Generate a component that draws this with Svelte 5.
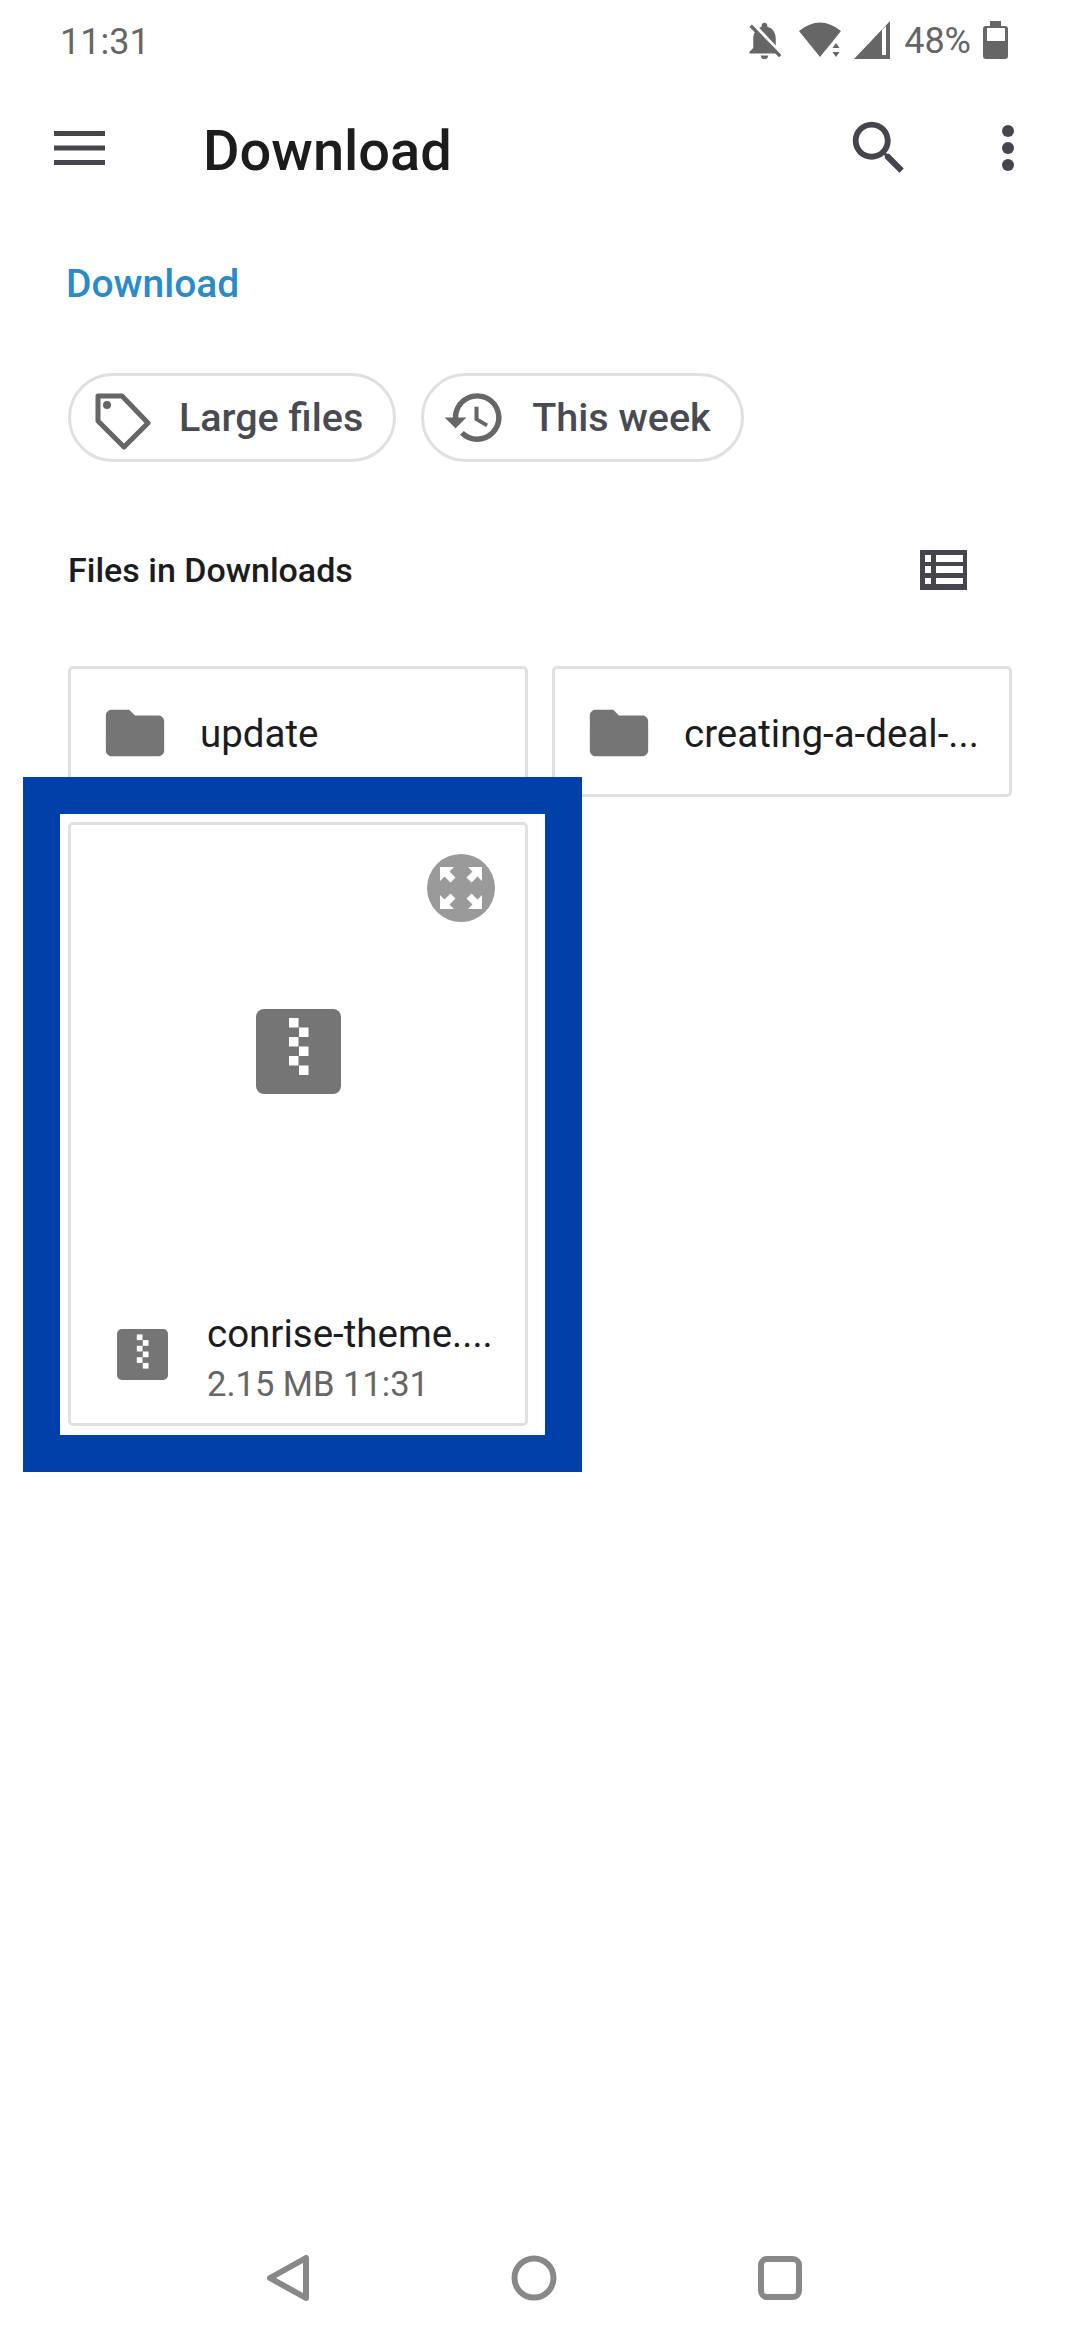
<script>
  const folders = ['update', 'creating-a-deal-...'];
  const zipRows = [
    [33, 9], [43, 18.5], [33, 28], [43, 37.5], [33, 47], [43, 56.5]
  ];
</script>

{#snippet zipIcon(size)}
  <svg class="zip" width={size} height={size} viewBox="0 0 85 85">
    <rect width="85" height="85" rx="8" fill="#757575" />
    {#each zipRows as [x, y]}
      <rect {x} {y} width="9.5" height="9.5" fill="#fff" />
    {/each}
  </svg>
{/snippet}

<div class="page">
  <div class="status">
    <span class="time">11:31</span>
    <div class="status-right">
      <svg width="45" height="45" viewBox="0 0 24 24" fill="#666">
        <path d="M20 18.69L7.84 6.14 5.27 3.49 4 4.76l2.8 2.8v.01c-.52.99-.8 2.16-.8 3.42v5l-2 2v1h13.73l2 2L21 19.72l-1-1.03zM12 22c1.11 0 2-.89 2-2h-4c0 1.11.89 2 2 2zm6-7.32V11c0-3.08-1.64-5.64-4.5-6.32V4c0-.83-.67-1.5-1.5-1.5s-1.5.67-1.5 1.5v.68c-.15.03-.29.08-.42.12-.1.03-.2.07-.3.11h-.01c-.2.08-.4.17-.59.27-.01 0-.01 0-.02.01L18 14.68z" />
      </svg>
      <svg class="wifi" width="42" height="36" viewBox="0 0 42 36" fill="#666">
        <path d="M21 35L0 9Q21 -8 42 9L32 21.5L25 30z" />
        <path d="M37 21l3.5 5h-7zM37 35l3.5-5h-7z" />
      </svg>
      <svg class="signal" width="36" height="38" viewBox="0 0 36 38" fill="#666">
        <path fill-rule="evenodd" d="M0 38L36 0V38zM28 9V34H32V5z" />
      </svg>
      <span class="battery-text">48%</span>
      <svg width="25" height="38" viewBox="0 0 25 38" fill="#666">
        <path fill-rule="evenodd" d="M7 0H18V5H22Q25 5 25 8V35Q25 38 22 38H3Q0 38 0 35V8Q0 5 3 5H7zM4 7V20H22V7z" />
      </svg>
    </div>
  </div>

  <header class="appbar">
    <svg class="menu" width="51" height="34" viewBox="0 0 51 34" fill="#45454d">
      <rect y="0" width="51" height="5" />
      <rect y="14.5" width="51" height="5" />
      <rect y="29" width="51" height="5" />
    </svg>
    <h1>Download</h1>
    <svg class="search" width="70" height="70" viewBox="0 0 24 24" fill="#45454d">
      <path d="M15.5 14h-.79l-.28-.27C15.41 12.59 16 11.11 16 9.5 16 5.91 13.09 3 9.5 3S3 5.91 3 9.5 5.91 16 9.5 16c1.61 0 3.09-.59 4.23-1.57l.27.28v.79l5 4.99L20.49 19l-4.99-5zm-6 0C7.01 14 5 11.99 5 9.5S7.01 5 9.5 5 14 7.01 14 9.5 11.99 14 9.5 14z" />
    </svg>
    <svg class="more" width="12" height="46" viewBox="0 0 12 46" fill="#45454d">
      <circle cx="6" cy="6" r="6" />
      <circle cx="6" cy="23" r="6" />
      <circle cx="6" cy="40" r="6" />
    </svg>
  </header>

  <div class="crumb">Download</div>

  <div class="chips">
    <div class="chip">
      <svg width="65" height="65" viewBox="0 0 65 65" fill="none" stroke="#666" stroke-width="5" stroke-linejoin="round">
        <path d="M9 11H33L59 38L35 62L9 36z" />
        <circle cx="18" cy="20" r="4" fill="#666" stroke="none" />
      </svg>
      <span>Large files</span>
    </div>
    <div class="chip">
      <svg width="65" height="65" viewBox="0 0 24 24" fill="#666">
        <path d="M13 3c-4.97 0-9 4.03-9 9H1l3.89 3.89.07.14L9 12H6c0-3.87 3.13-7 7-7s7 3.13 7 7-3.13 7-7 7c-1.93 0-3.68-.79-4.94-2.06l-1.42 1.42C8.27 19.99 10.51 21 13 21c4.97 0 9-4.03 9-9s-4.03-9-9-9zm-1 5v5l4.28 2.54.72-1.21-3.5-2.08V8H12z" />
      </svg>
      <span>This week</span>
    </div>
  </div>

  <div class="section-head">
    <span>Files in Downloads</span>
    <svg width="47" height="40" viewBox="0 0 47 40" fill="#45454d">
      <path fill-rule="evenodd" d="M0 0H47V40H0zM5 5V12H11V5zM16 5V12H43V5zM5 16V23H11V16zM16 16V23H43V16zM5 28V34H11V28zM16 28V34H43V28z" />
    </svg>
  </div>

  <div class="grid">
    {#each folders as name}
      <div class="card folder">
        <svg width="70" height="70" viewBox="0 0 24 24" fill="#757575">
          <path d="M10 4H4c-1.1 0-1.99.9-1.99 2L2 18c0 1.1.9 2 2 2h16c1.1 0 2-.9 2-2V8c0-1.1-.9-2-2-2h-8l-2-2z" />
        </svg>
        <span>{name}</span>
      </div>
    {/each}

    <div class="card file">
      <div class="preview">
        {@render zipIcon(85)}
      </div>
      <div class="file-info">
        {@render zipIcon(51)}
        <div class="file-text">
          <div class="file-name">conrise-theme....</div>
          <div class="file-meta">2.15 MB 11:31</div>
        </div>
      </div>
      <div class="expand">
        <svg width="42" height="42" viewBox="0 0 42 42" fill="#fff">
          {#each [0, 90, 180, 270] as angle}
            <path transform="rotate({angle} 21 21)" d="M0 0H14L9.5 4.5L15.5 10.5L10.5 15.5L4.5 9.5L0 14z" />
          {/each}
        </svg>
      </div>
      <div class="highlight"></div>
    </div>
  </div>

  <nav class="nav">
    <svg width="60" height="60" viewBox="0 0 60 60" fill="none" stroke="#888" stroke-width="6" stroke-linejoin="round">
      <path d="M12 30L48 10V50z" />
    </svg>
    <svg width="60" height="60" viewBox="0 0 60 60" fill="none" stroke="#888" stroke-width="6">
      <circle cx="30" cy="30" r="19.5" />
    </svg>
    <svg width="60" height="60" viewBox="0 0 60 60" fill="none" stroke="#888" stroke-width="6">
      <rect x="11" y="11" width="38" height="38" rx="6" />
    </svg>
  </nav>
</div>

<style>
:global(body) {
  margin: 0;
  background: #fff;
}
.page {
  width: 1080px;
  height: 2340px;
  display: flex;
  flex-direction: column;
  overflow: hidden;
  font-family: Roboto, "Noto Sans", sans-serif;
  color: #1c1c1e;
  background: #fff;
}

/* status bar */
.status {
  height: 80px;
  flex: none;
  display: flex;
  align-items: center;
  justify-content: space-between;
  padding: 0 72px 0 60px;
  color: #666;
}
.time {
  font-size: 36px;
  margin-top: 3px;
}
.status-right {
  display: flex;
  align-items: center;
}
.wifi {
  margin-left: 12px;
}
.signal {
  margin-left: 13px;
}
.battery-text {
  font-size: 36px;
  margin: 2px 12px 0 14px;
}

/* toolbar */
.appbar {
  height: 136px;
  flex: none;
  display: flex;
  align-items: center;
  padding-left: 54px;
}
.appbar h1 {
  margin: 5px 0 0 98px;
  font-size: 56px;
  font-weight: 500;
}
.search {
  margin-left: auto;
}
.more {
  margin: 0 66px 0 88px;
}

.crumb {
  margin: 40px 0 0 66px;
  font-size: 39px;
  font-weight: 500;
  line-height: 56px;
  color: #2a8bcb;
}

.chips {
  display: flex;
  gap: 25px;
  margin: 61px 0 0 68px;
}
.chip {
  height: 89px;
  box-sizing: border-box;
  display: flex;
  align-items: center;
  gap: 25px;
  padding: 0 30px 0 18px;
  border: 3px solid #e0e0e0;
  border-radius: 45px;
  font-size: 39.5px;
  font-weight: 500;
  color: #4a4a52;
}

.section-head {
  height: 80px;
  display: flex;
  align-items: center;
  justify-content: space-between;
  margin-top: 68px;
  padding: 0 113px 0 68px;
  font-size: 34px;
  font-weight: 500;
}

.grid {
  display: grid;
  grid-template-columns: 460px 460px;
  grid-template-rows: 131px 604px;
  gap: 25px 24px;
  margin: 56px 0 0 68px;
}
.card {
  box-sizing: border-box;
  border: 3px solid #e0e0e0;
  border-radius: 5px;
  background: #fff;
}
.folder {
  display: flex;
  align-items: center;
  gap: 30px;
  padding: 3px 0 0 29px;
  font-size: 38.5px;
}
.file {
  position: relative;
  display: flex;
  flex-direction: column;
}
.preview {
  flex: 1;
  display: flex;
  align-items: center;
  justify-content: center;
}
.zip {
  flex: none;
  display: block;
}
.file-info {
  height: 146px;
  box-sizing: border-box;
  padding: 16px 0 0 46px;
  flex: none;
  display: flex;
  align-items: center;
  gap: 39px;
}
.file-info .zip {
  margin-bottom: 7px;
}
.file-name {
  font-size: 38.5px;
  line-height: 48px;
}
.file-meta {
  margin-top: 4px;
  font-size: 34.5px;
  line-height: 44px;
  color: #666;
}
.expand {
  position: absolute;
  top: 29px;
  right: 30px;
  width: 68px;
  height: 68px;
  border-radius: 50%;
  background: #9a9a9a;
  display: flex;
  align-items: center;
  justify-content: center;
}
.highlight {
  position: absolute;
  top: -48px;
  left: -48px;
  right: -57px;
  bottom: -49px;
  border: 37px solid #0040a8;
  pointer-events: none;
}

.nav {
  margin-top: auto;
  height: 124px;
  flex: none;
  display: flex;
  align-items: center;
  gap: 186px;
  padding-left: 258px;
}
</style>
